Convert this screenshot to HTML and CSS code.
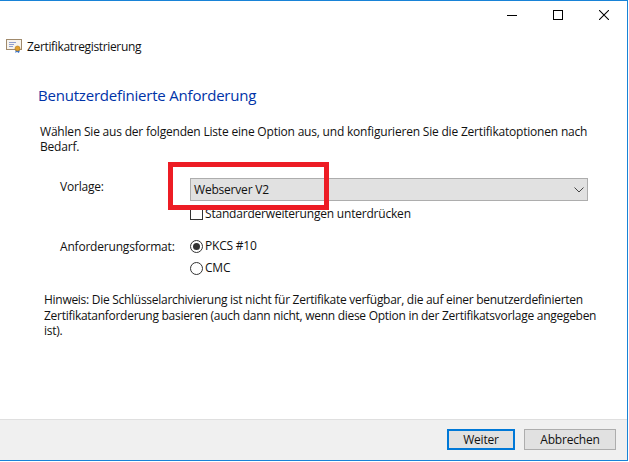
FILE: index.html
```html
<!DOCTYPE html>
<html lang="de">
<head>
  <meta charset="UTF-8" />
  <meta name="viewport" content="width=device-width, initial-scale=1.0" />
  <title>Zertifikatregistrierung</title>
  <link rel="stylesheet" href="styles.css">
</head>
<body>
<div class="window">
  <div class="title-bar">
    <div class="win-btn">
      <svg width="10" height="10" viewBox="0 0 10 10"><path d="M0 5.5h10" stroke="#000"/></svg>
    </div>
    <div class="win-btn">
      <svg width="10" height="10" viewBox="0 0 10 10"><rect x="0.5" y="0.5" width="9" height="9" fill="none" stroke="#000"/></svg>
    </div>
    <div class="win-btn">
      <svg width="10" height="10" viewBox="0 0 10 10"><path d="M0 0l10 10M10 0L0 10" stroke="#000" stroke-width="1.05"/></svg>
    </div>
  </div>

  <div class="app-row">
    <svg class="cert-icon" width="16" height="16" viewBox="0 0 16 16">
      <rect x="0.5" y="1.5" width="15" height="10" fill="#f7f4ee" stroke="#a08a6c"/>
      <path d="M3 4.5h7M3 6.5h5M3 8.5h4" stroke="#8f9fd0"/>
      <path d="M9.5 11v4l1.5-1.2 1.5 1.2 1-1v-3z" fill="#2f6fd0"/>
      <circle cx="11.5" cy="10.5" r="2.5" fill="#e0a030" stroke="#b57a12" stroke-width="0.6"/>
    </svg>
    <span>Zertifikatregistrierung</span>
  </div>

  <div class="content">
    <h1>Benutzerdefinierte Anforderung</h1>
    <p class="intro">Wählen Sie aus der folgenden Liste eine Option aus, und konfigurieren Sie die Zertifikatoptionen nach Bedarf.</p>

    <div class="form-row row-template">
      <div class="form-label">Vorlage:</div>
      <div class="form-field">
        <div class="combo">
          <span>Webserver V2</span>
          <svg width="10" height="6" viewBox="0 0 10 6"><path d="M0.5 0.5 5 5 9.5 0.5" fill="none" stroke="#444"/></svg>
        </div>
        <label class="check-row"><span class="checkbox"></span>Standarderweiterungen unterdrücken</label>
      </div>
    </div>

    <div class="form-row row-format">
      <div class="form-label">Anforderungsformat:</div>
      <div class="form-field radios">
        <label class="radio-row"><span class="radio checked"></span>PKCS #10</label>
        <label class="radio-row"><span class="radio"></span>CMC</label>
      </div>
    </div>

    <p class="note">Hinweis: Die Schlüsselarchivierung ist nicht für Zertifikate verfügbar, die auf einer benutzerdefinierten Zertifikatanforderung basieren (auch dann nicht, wenn diese Option in der Zertifikatsvorlage angegeben ist).</p>
  </div>

  <div class="footer">
    <button class="btn btn-default">Weiter</button>
    <button class="btn btn-cancel">Abbrechen</button>
  </div>

  <div class="highlight"></div>
</div>
</body>
</html>
```

FILE: styles.css
```css
* { box-sizing: border-box; margin: 0; padding: 0; }

body {
  font-family: "Open Sans", "Noto Sans", sans-serif;
  font-size: 12px;
  letter-spacing: -0.2px;
  color: #111;
  background: #fff;
  overflow: hidden;
}

.window {
  position: relative;
  width: 628px;
  height: 461px;
  display: flex;
  flex-direction: column;
  border-top: 1px solid #1883d7;
  border-right: 1px solid #1883d7;
  border-bottom: 1px solid #1883d7;
  background: #fff;
}

.title-bar {
  height: 30px;
  display: flex;
  justify-content: flex-end;
  align-items: flex-start;
}
.win-btn {
  width: 46px;
  height: 28px;
  display: flex;
  align-items: center;
  justify-content: center;
}

.app-row {
  display: flex;
  align-items: center;
  gap: 5px;
  height: 30px;
  padding-left: 6px;
  letter-spacing: -0.35px;
}

.content {
  flex: 1;
  padding: 0 39px 0 38px;
}

h1 {
  font-size: 15px;
  font-weight: 400;
  color: #0033a8;
  margin-top: 24px;
  line-height: 20px;
}

.intro {
  margin: 19px 0 0 2px;
  line-height: 15px;
}

.form-row {
  display: flex;
}
.form-label {
  width: 152px;
  padding-left: 22px;
  flex-shrink: 0;
}
.form-field {
  flex: 1;
}

.row-template {
  margin-top: 24px;
}

.combo {
  height: 23px;
  display: flex;
  align-items: center;
  justify-content: space-between;
  padding: 0 3px;
  background: #e1e1e1;
  border: 1px solid #adadad;
}

.check-row, .radio-row {
  display: flex;
  align-items: center;
  gap: 2px;
}
.check-row {
  height: 14px;
  margin-top: 5px;
}
.checkbox {
  width: 13px;
  height: 13px;
  border: 1px solid #333;
  background: #fff;
}

.row-format {
  margin-top: 18px;
}
.radios {
  display: flex;
  flex-direction: column;
  gap: 7px;
}
.radio-row {
  height: 15px;
}
.radio {
  width: 13px;
  height: 13px;
  margin-top: 2px;
  border: 1px solid #333;
  border-radius: 50%;
  display: flex;
  align-items: center;
  justify-content: center;
}
.radio.checked::after {
  content: "";
  width: 7px;
  height: 7px;
  border-radius: 50%;
  background: #333;
}

.note {
  margin: 17px -14px 0 6px;
  line-height: 15.5px;
  letter-spacing: -0.28px;
}

.footer {
  height: 41px;
  display: flex;
  justify-content: flex-end;
  gap: 9px;
  padding: 9px 11px 0 0;
  background: #f0f0f0;
  border-top: 1px solid #dfdfdf;
}

.btn {
  height: 21px;
  font-family: inherit;
  font-size: 12px;
  letter-spacing: inherit;
  color: #111;
  background: #e1e1e1;
  border: 1px solid #adadad;
}
.btn-default {
  width: 68px;
  border: 2px solid #0078d7;
}
.btn-cancel {
  width: 92px;
}

/* annotation drawn on top of the screenshot */
.highlight {
  position: absolute;
  left: 168px;
  top: 161px;
  width: 161px;
  height: 48px;
  border: 5px solid #ed1c24;
}
```
